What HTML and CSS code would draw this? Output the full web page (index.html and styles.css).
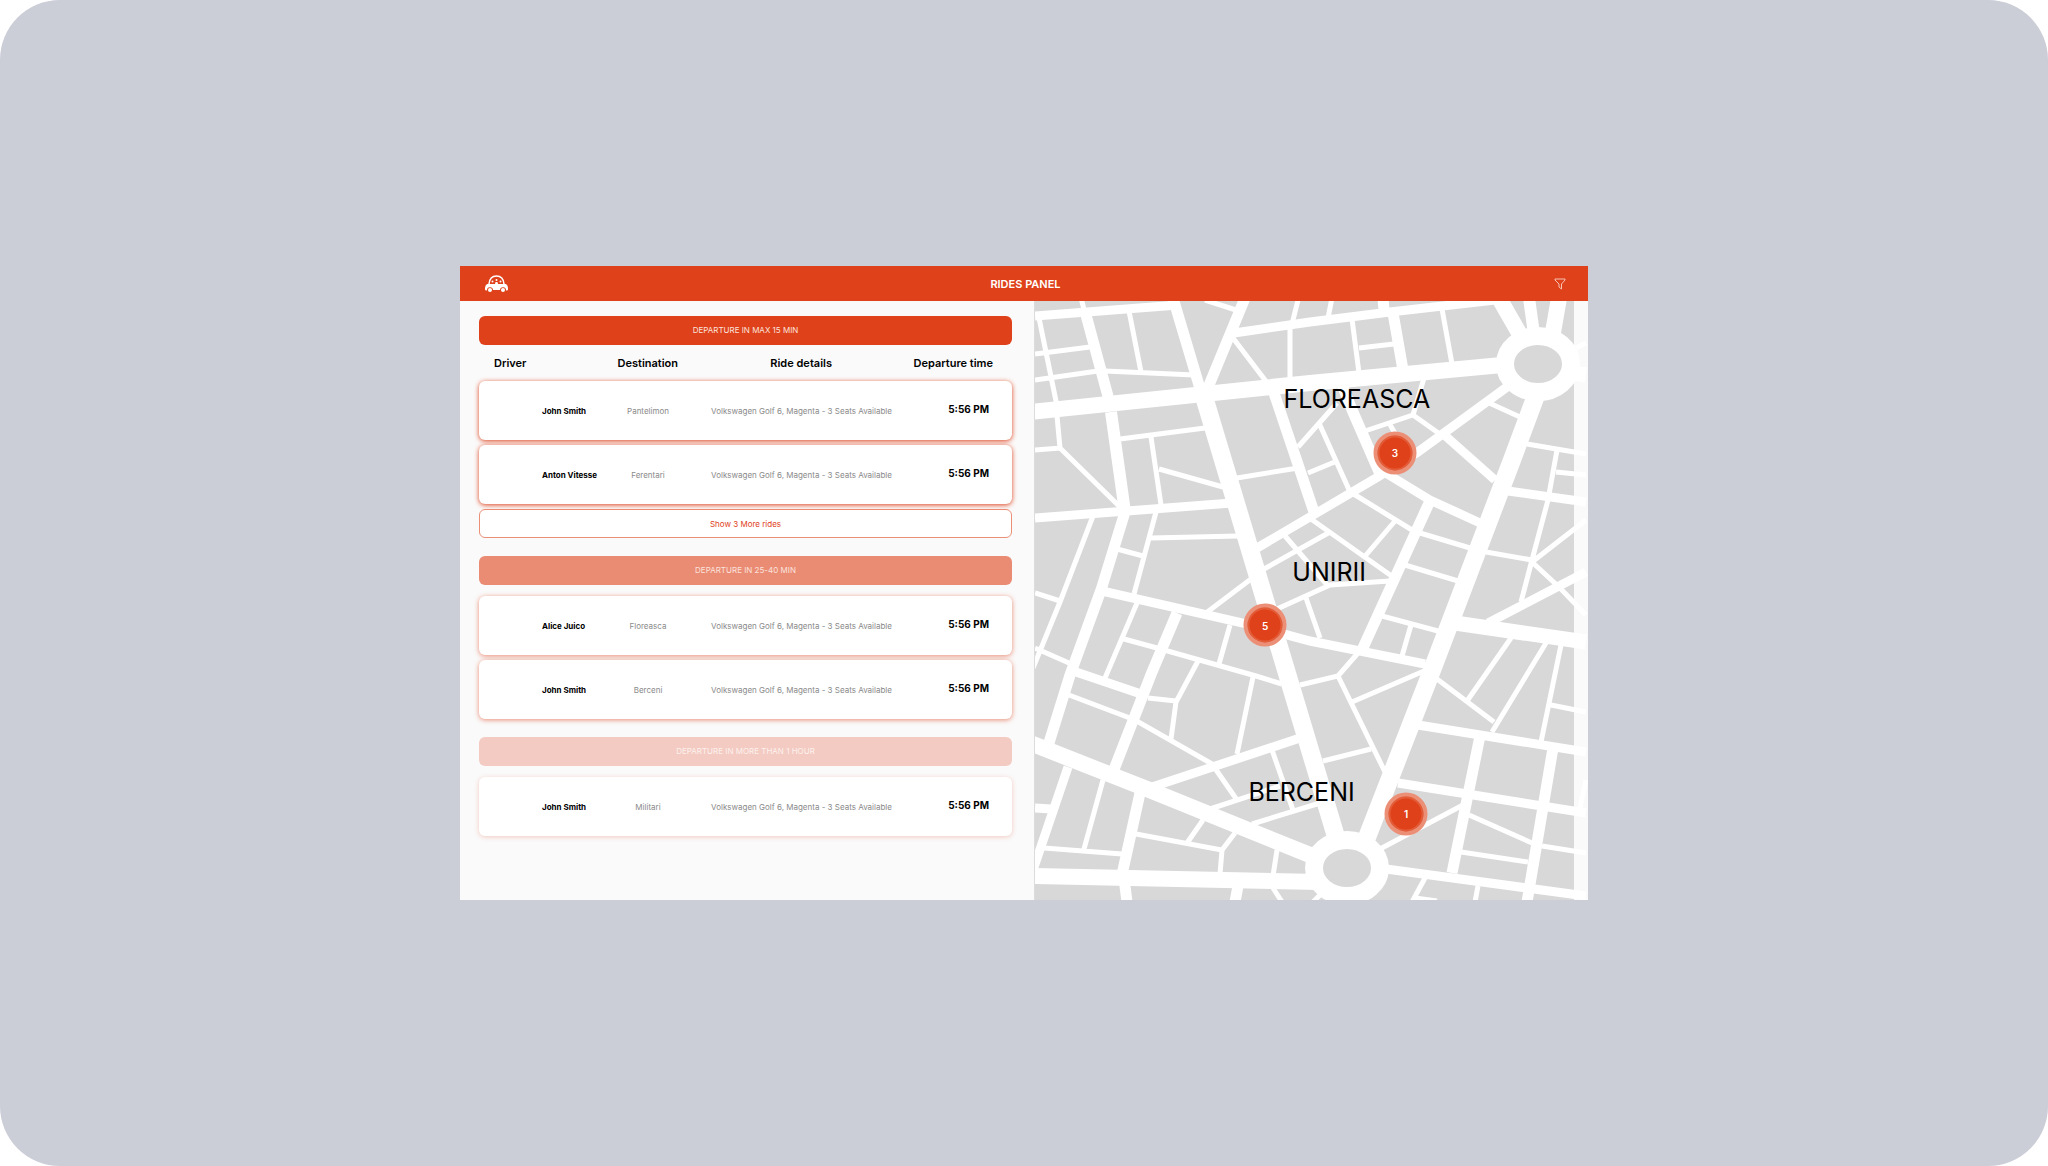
FILE: index.html
```
<!DOCTYPE html>
<html lang="en">
<head>
    <meta charset="UTF-8">
    <meta name="viewport" content="width=device-width, initial-scale=1.0">
    <title>Rides Panel</title>
    <link rel="stylesheet" href="styles.css">
</head>
<body>

    <div class="page">
        <div class="app">
            <header class="topbar">
                <a class="logo" href="#" aria-label="Home">
                    <svg viewBox="0 0 46 34" width="23" height="17">
                        <path d="M8 18 C9 7 15 2 23 2 C31 2 37 7 38 18" fill="none" stroke="#fff" stroke-width="3"/>
                        <path d="M4 18 H42 Q46 21 46 26 V29 Q46 31 43 31 H42 A6 6 0 0 0 30 30 H16 A6 6 0 0 0 4 31 H3 Q0 31 0 29 V26 Q0 21 4 18 Z" fill="#fff"/>
                        <circle cx="10" cy="30" r="4" fill="#fff"/>
                        <circle cx="36" cy="30" r="4" fill="#fff"/>
                        <circle cx="15" cy="13" r="2" fill="#fff"/>
                        <circle cx="23" cy="10" r="2" fill="#fff"/>
                        <circle cx="31" cy="13" r="2" fill="#fff"/>
                        <path d="M20 18 L21 14 H25 L26 18" fill="#fff"/>
                    </svg>
                </a>
                <h1>RIDES PANEL</h1>
                <button class="filter" aria-label="Filter rides">
                    <svg viewBox="0 0 24 24" width="12" height="12" fill="none" stroke="#f6c3b4" stroke-width="2">
                        <path d="M2 2 H22 V4 L15 12 V22 L10 18 V12 L2 4 Z"/>
                    </svg>
                </button>
            </header>

            <main class="content">
                <div class="rides">
                    <section class="group soon">
                        <h2>DEPARTURE IN MAX 15 MIN</h2>
                        <table>
                            <thead>
                                <tr><th>Driver</th><th>Destination</th><th>Ride details</th><th>Departure time</th></tr>
                            </thead>
                            <tbody>
                                <tr><td>John Smith</td><td>Pantelimon</td><td>Volkswagen Golf 6, Magenta - 3 Seats Available</td><td>5:56 PM</td></tr>
                                <tr><td>Anton Vitesse</td><td>Ferentari</td><td>Volkswagen Golf 6, Magenta - 3 Seats Available</td><td>5:56 PM</td></tr>
                            </tbody>
                        </table>
                        <button class="more">Show 3 More rides</button>
                    </section>

                    <section class="group later">
                        <h2>DEPARTURE IN 25-40 MIN</h2>
                        <table>
                            <tbody>
                                <tr><td>Alice Juico</td><td>Floreasca</td><td>Volkswagen Golf 6, Magenta - 3 Seats Available</td><td>5:56 PM</td></tr>
                                <tr><td>John Smith</td><td>Berceni</td><td>Volkswagen Golf 6, Magenta - 3 Seats Available</td><td>5:56 PM</td></tr>
                            </tbody>
                        </table>
                    </section>

                    <section class="group last">
                        <h2>DEPARTURE IN MORE THAN 1 HOUR</h2>
                        <table>
                            <tbody>
                                <tr><td>John Smith</td><td>Militari</td><td>Volkswagen Golf 6, Magenta - 3 Seats Available</td><td>5:56 PM</td></tr>
                            </tbody>
                        </table>
                    </section>
                </div>

                <div class="map">
                    <svg class="streets" viewBox="1035 301 553 599" preserveAspectRatio="xMidYMid slice" aria-hidden="true">
                        <rect x="1035" y="301" width="539" height="599" fill="#d8d8d8"/>
                        <g fill="none" stroke="#fff">
                            <!-- avenues -->
                            <path stroke-width="18" d="M1205 400 L1337 840 M1538 390 L1512 460 L1429 678 L1366 840"/>
                            <path stroke-width="16" d="M1030 412 L1310 383 L1502 365 M1030 743 L1147 789 L1310 855 M1035 876 L1320 882 M1499 298 L1522 338 M1559 298 L1552 338"/>
                            <path stroke-width="15" d="M1455 623 L1586 642 M1572 373 L1586 375"/>
                            <path stroke-width="12" d="M1111 412 L1125 512 M1529 298 L1534 334"/>
                            <path stroke-width="11" d="M1173 298 L1204 402 M1245 298 L1207 390 M1086 315 L1109 400 M1274 393 L1314 512 M1383 298 L1384 310 M1393 313 L1403 370 M1342 385 L1353 412 L1380 474 M1429 503 L1362 650 M1125 512 L1101 590 L1070 675 L1048 746 M1177 613 L1152 672 L1113 772 M1140 793 L1123 870 L1127 902 M1238 886 L1235 902 M1480 736 L1452 873 M1553 748 L1527 902"/>
                            <!-- streets -->
                            <path stroke-width="9" d="M1035 316 L1178 305 M1234 333 L1310 322 L1390 312 L1495 300 M1507 387 L1418 452 L1378 477 L1257 548 M1441 432 L1495 480 M1384 472 L1430 500 L1480 523 M1508 491 L1586 502 M1488 623 L1586 572 M1102 591 L1243 623 L1310 641 L1425 664 M1035 518 L1232 503 M1076 672 L1141 694 M1146 789 L1300 738 M1068 767 L1033 870 M1035 808 L1051 809 M1386 869 L1586 896 M1418 725 L1586 752 M1398 783 L1586 813"/>
                            <!-- lanes -->
                            <path stroke-width="5" d="M1081 298 L1086 317 M1039 318 L1057 406 M1057 416 L1060 448 M1035 450 L1060 448 L1120 507 M1035 354 L1090 347 M1035 380 L1098 371 M1105 371 L1194 375 M1129 311 L1141 372 M1120 439 L1205 428 M1151 437 L1161 505 M1159 469 L1223 487"/>
                            <path stroke-width="5" d="M1205 300 L1236 310 M1233 338 L1268 384 M1298 300 L1292 324 M1290 328 L1290 380 M1332 298 L1328 318 M1237 478 L1298 468 M1298 447 L1337 403 M1319 423 L1350 492 M1308 473 L1337 461 M1352 319 L1359 373 M1359 348 L1394 344 M1442 309 L1452 364"/>
                            <path stroke-width="5" d="M1365 431 L1413 415 L1444 437 M1389 423 L1396 435 M1424 378 L1413 415 M1487 402 L1520 417 M1527 444 L1586 454 M1557 450 L1548 500 L1532 560 L1521 602 M1556 472 L1586 475 M1586 520 L1532 562 L1560 588 L1586 615 M1486 552 L1532 560"/>
                            <path stroke-width="5" d="M1420 533 L1470 548 M1405 565 L1458 581 M1382 616 L1438 631 M1411 625 L1402 656 M1352 493 L1412 530 M1395 521 L1366 555 M1311 519 L1393 577 M1330 532 L1264 569 M1285 536 L1329 587 M1390 581 L1330 585 L1277 609 M1306 598 L1320 638 M1251 579 L1206 613 M1151 538 L1238 536"/>
                            <path stroke-width="5" d="M1093 516 L1060 602 L1033 668 M1156 512 L1134 594 M1117 549 L1143 556 M1035 593 L1060 601 M1035 648 L1069 663 M1137 603 L1105 678 M1124 639 L1157 648 L1256 676 L1282 684 M1230 625 L1219 664 M1198 661 L1176 702 L1171 739 M1148 698 L1176 701 M1069 695 L1135 720 L1212 764 L1237 800 M1253 677 L1237 754"/>
                            <path stroke-width="5" d="M1272 750 L1293 810 M1210 809 L1280 786 M1252 824 L1320 803 M1300 685 L1338 676 L1358 653 M1338 676 L1385 772 M1352 702 L1424 671 M1323 761 L1371 749 M1103 780 L1084 849 M1044 848 L1122 854 M1136 834 L1222 850 L1220 874 M1222 850 L1235 833 M1203 820 L1187 843 M1277 850 L1273 876 M1273 888 L1282 902 M1322 893 L1313 902"/>
                            <path stroke-width="5" d="M1380 849 L1463 805 M1437 679 L1494 722 M1546 643 L1492 732 M1511 638 L1467 701 M1561 645 L1541 742 M1551 705 L1586 712 M1469 815 L1532 843 M1542 846 L1586 853 M1461 852 L1528 862 M1425 878 L1412 902 M1415 898 L1437 901 M1478 886 L1475 902 M1576 348 L1586 343 M1580 808 L1586 780"/>
                        </g>
                        <!-- roundabouts -->
                        <g fill="#d8d8d8" stroke="#fff" stroke-width="18">
                            <ellipse cx="1538" cy="364" rx="33" ry="28"/>
                            <ellipse cx="1347" cy="868" rx="33" ry="28"/>
                        </g>
                    </svg>

                    <span class="area floreasca">FLOREASCA</span>
                    <span class="area unirii">UNIRII</span>
                    <span class="area berceni">BERCENI</span>

                    <button class="pin pin-floreasca" aria-label="3 rides in Floreasca">3</button>
                    <button class="pin pin-unirii" aria-label="5 rides in Unirii">5</button>
                    <button class="pin pin-berceni" aria-label="1 ride in Berceni">1</button>
                </div>
            </main>
        </div>
    </div>

</body>
</html>
```
FILE: styles.css
```
* {
    box-sizing: border-box;
}

body {
    margin: 0;
    background: #fff;
    color: #000;
    font-family: Inter, sans-serif;
    font-size: 8px;
}

button {
    font-family: inherit;
    padding: 0;
    cursor: pointer;
}

.page {
    min-height: 100vh;
    display: flex;
    align-items: center;
    justify-content: center;
    background: #cbcdd7;
    border-radius: 60px;
}

.app {
    width: 100%;
    max-width: 1128px;
    background: #fafafa;
}

/* top bar */
.topbar {
    display: grid;
    grid-template-columns: 1fr auto 1fr;
    align-items: center;
    height: 35px;
    padding: 0 22px 0 25px;
    background: #df411b;
}

.topbar h1 {
    margin: 0;
    color: #fff;
    font-size: 11px;
    font-weight: 600;
}

.logo,
.filter {
    display: flex;
    border: none;
    background: none;
}

.logo {
    justify-self: start;
}

.filter {
    justify-self: end;
}

/* layout */
.content {
    display: grid;
    grid-template-columns: 574fr 554fr;
}

.rides {
    display: flex;
    flex-direction: column;
    gap: 18px;
    padding: 15px 22px 64px 19px;
}

.group {
    --shade: 223, 65, 27;
    --strength: 1;
}

.later { --strength: 0.6; }
.last { --strength: 0.25; }

.group h2 {
    margin: 0 0 11px;
    border-radius: 6px;
    background: rgba(var(--shade), var(--strength));
    color: #fbe3dc;
    font-size: 8px;
    font-weight: 400;
    line-height: 29px;
    text-align: center;
}

.soon h2 {
    margin-bottom: 0;
}

.last h2 {
    color: #fdf1ee;
}

/* ride rows */
table,
thead {
    display: block;
}

tbody {
    display: grid;
    gap: 5px;
}

tr {
    display: grid;
    grid-template-columns: 128fr 82fr 225fr 98fr;
    align-items: center;
}

thead tr {
    height: 36px;
}

tbody tr {
    height: 59px;
    border-radius: 6px;
    background: #fff;
    box-shadow: 0 1px 5px rgba(var(--shade), var(--strength));
}

th,
td {
    padding: 0;
    text-align: center;
    white-space: nowrap;
}

th {
    font-size: 11px;
    font-weight: 600;
}

th:first-child {
    padding-left: 15px;
    text-align: left;
}

th:last-child {
    padding-right: 19px;
    text-align: right;
}

td {
    color: #8a8a8a;
}

td:first-child {
    padding-left: 63px;
    color: #000;
    font-weight: 700;
    text-align: left;
}

td:last-child {
    padding: 0 23px 3px 0;
    color: #000;
    font-size: 10px;
    font-weight: 700;
    text-align: right;
}

.more {
    display: block;
    width: 100%;
    height: 29px;
    margin-top: 5px;
    border: 1px solid #ec8f77;
    border-radius: 6px;
    background: #fff;
    color: #df411b;
    font-size: 8px;
}

/* map */
.map {
    position: relative;
    overflow: hidden;
    border-left: 1px solid #dcdcdc;
}

.streets {
    position: absolute;
    width: 100%;
    height: 100%;
}

.area,
.pin {
    position: absolute;
    transform: translate(-50%, -50%);
}

.area {
    font-size: 25px;
}

.floreasca { left: 58.2%; top: 16.4%; }
.unirii { left: 53.2%; top: 45.3%; }
.berceni { left: 48.2%; top: 82%; }

.pin {
    width: 43px;
    height: 43px;
    border: 4px solid #ec8f77;
    border-radius: 50%;
    background: #df411b;
    box-shadow: inset 0 0 0 2px #e35c38;
    color: #fff;
    font-size: 10px;
    font-weight: 600;
}

.pin-floreasca { left: 65.1%; top: 25.3%; }
.pin-unirii { left: 41.6%; top: 54.1%; }
.pin-berceni { left: 67.1%; top: 85.6%; }
```
